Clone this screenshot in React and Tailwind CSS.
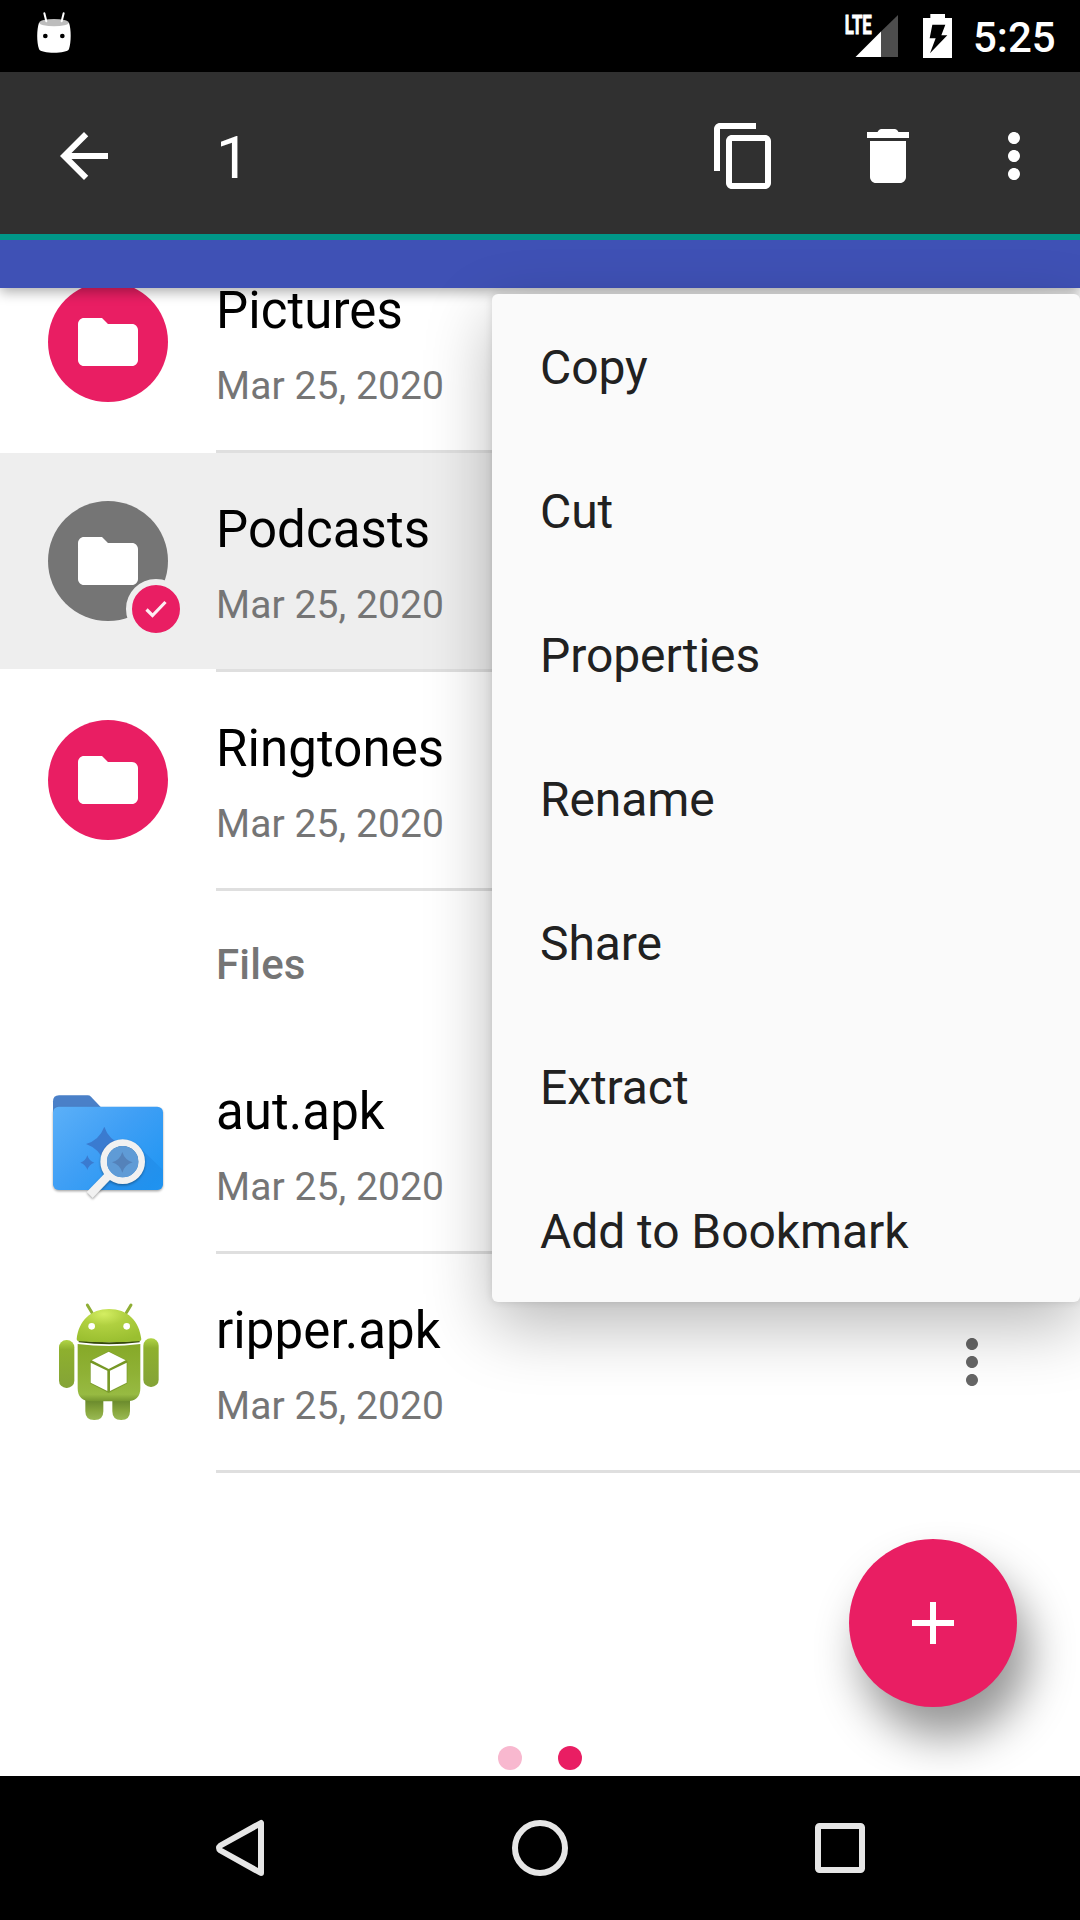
function Svg({ d, className }) {
  return (
    <svg viewBox="0 0 24 24" fill="currentColor" className={className}>
      <path d={d} />
    </svg>
  );
}

const PATHS = {
  back: "M20 11H7.83l5.59-5.59L12 4l-8 8 8 8 1.41-1.41L7.83 13H20v-2z",
  copy: "M16 1H4c-1.1 0-2 .9-2 2v14h2V3h12V1zm3 4H8c-1.1 0-2 .9-2 2v14c0 1.1.9 2 2 2h11c1.1 0 2-.9 2-2V7c0-1.1-.9-2-2-2zm0 16H8V7h11v14z",
  trash: "M6 19c0 1.1.9 2 2 2h8c1.1 0 2-.9 2-2V7H6v12zM19 4h-3.5l-.4-.6q-.4-.4-1-.4h-4.200q-.6 0-1 .4l-.4.6H5v2h14V4z",
  more: "M12 8c1.1 0 2-.9 2-2s-.9-2-2-2-2 .9-2 2 .9 2 2 2zm0 2c-1.1 0-2 .9-2 2s.9 2 2 2 2-.9 2-2-.9-2-2-2zm0 6c-1.1 0-2 .9-2 2s.9 2 2 2 2-.9 2-2-.9-2-2-2z",
  folder: "M10 4H4c-1.1 0-1.99.9-1.99 2L2 18c0 1.1.9 2 2 2h16c1.1 0 2-.9 2-2V8c0-1.1-.9-2-2-2h-8l-2-2z",
  plus: "M19 13h-6v6h-2v-6H5v-2h6V5h2v6h6v2z",
};

function StatusBar() {
  return (
    <div className="flex h-[72px] shrink-0 items-start bg-black text-white">
      <svg viewBox="108 30 108 132" className="mt-[10px] ml-9 h-11 w-9">
        <path d="M117 68C110 88 110 126 117 147C122 162 202 162 207 147C214 126 214 88 207 68z" fill="#fff" />
        <ellipse cx="162" cy="68" rx="44" ry="11" fill="#bdbdbd" />
        <path d="M133 40l6 24M191 40l-6 24" stroke="#fff" strokeWidth="6" strokeLinecap="round" />
        <circle cx="136" cy="108" r="7" fill="#000" />
        <circle cx="187" cy="108" r="7" fill="#000" />
      </svg>
      <svg viewBox="0 0 54 44" className="mt-[14px] ml-auto h-11 w-[54px] overflow-visible">
        <path d="M37 17.500V43H11.500z" fill="#fff" />
        <path d="M37 17.500L54 1V43H37z" fill="#4d4d4d" />
        <text x="0.8" y="19.500" fontSize="26" fontWeight="700" textLength="27" lengthAdjust="spacingAndGlyphs" fill="#fff" stroke="#fff" strokeWidth="0.9">LTE</text>
      </svg>
      <svg viewBox="729 42 87 132" className="mt-[14px] ml-[25px] h-11 w-[29px]">
        <path d="M751 42h44v12h21v120h-87V54h22z" fill="#fff" />
        <path d="M757 74h39l-12 32h18l-52 54 17-45h-18z" fill="#000" />
      </svg>
      <div className="mt-[13px] flex w-[128px] pl-[21px] text-[42px] leading-[50px] font-medium">5:25</div>
    </div>
  );
}

function ActionBar() {
  return (
    <div className="relative z-20 flex h-[168px] shrink-0 items-center border-b-6 border-[#009688] bg-[#303030] pt-1.5 pr-[30px] pl-12 text-white">
      <Svg d={PATHS.back} className="size-[72px]" />
      <div className="ml-24 pt-1 text-[60px] leading-[72px]">1</div>
      <Svg d={PATHS.copy} className="ml-auto size-[72px]" />
      <Svg d={PATHS.trash} className="ml-[72px] size-[72px]" />
      <Svg d={PATHS.more} className="ml-[54px] size-[72px]" />
    </div>
  );
}

function FolderAvatar({ selected }) {
  return (
    <div className={`relative flex size-[120px] items-center justify-center rounded-full text-white ${selected ? "bg-[#757575]" : "bg-[#e91e63]"}`}>
      <Svg d={PATHS.folder} className="size-[72px]" />
      {selected && (
        <div className="absolute -right-[18px] -bottom-[18px] flex size-[60px] items-center justify-center rounded-full border-6 border-[#eeeeee] bg-[#e91e63]">
          <svg viewBox="0 0 48 48" className="size-12 shrink-0" fill="none" stroke="#fdeef3" strokeWidth="3.2">
            <path d="M14.500 24.500l6 6L33.500 17" />
          </svg>
        </div>
      )}
    </div>
  );
}

function ExplorerIcon() {
  return (
    <svg viewBox="54 39 360 360" className="size-[120px]">
      <defs>
        <linearGradient id="face" x1="0" y1="0" x2="1" y2="0.8">
          <stop offset="0" stopColor="#5cb0f8" />
          <stop offset="0.5" stopColor="#3f9ff5" />
          <stop offset="1" stopColor="#2196f3" />
        </linearGradient>
        <linearGradient id="cast" x1="0" y1="0" x2="1" y2="1">
          <stop offset="0" stopColor="#1976d2" stopOpacity="0.6" />
          <stop offset="1" stopColor="#1e88e5" stopOpacity="0.2" />
        </linearGradient>
        <filter id="soft" x="-10%" y="-10%" width="120%" height="125%" colorInterpolationFilters="sRGB">
          <feDropShadow dx="0" dy="4" stdDeviation="3" floodOpacity="0.35" />
        </filter>
      </defs>
      <path d="M69 130V94q0-18 18-18h86q6 0 10 4l32 34z" fill="#4a80c8" />
      <rect x="69" y="110" width="330" height="250" rx="17" fill="url(#face)" filter="url(#soft)" />
      <path d="M324 228L399 300V343q0 17-17 17H214l26-28z" fill="url(#cast)" />
      <path d="M223 170Q236 210 276 222Q236 236 223 276Q208 236 168 222Q208 210 223 170z" fill="#3a7bd0" />
      <path d="M172 256Q177 273 193 278Q177 283 172 300Q167 283 151 278Q167 273 172 256z" fill="#3a7bd0" />
      <g filter="url(#soft)">
        <path d="M238 314L179 375" stroke="#f1f1f1" strokeWidth="25" />
        <circle cx="278" cy="275" r="57" fill="none" stroke="#f1f1f1" strokeWidth="20" />
      </g>
      <circle cx="278" cy="275" r="47" fill="#5f9bd6" />
      <path d="M277 246Q284 270 308 277Q284 284 277 308Q270 284 246 277Q270 270 277 246z" fill="#5482ba" />
    </svg>
  );
}

function ApkIcon() {
  return (
    <svg viewBox="54 66 360 360" className="size-[120px]">
      <defs>
        <linearGradient id="body" x1="0" y1="0" x2="0" y2="1">
          <stop offset="0" stopColor="#86a928" />
          <stop offset="0.5" stopColor="#8fb135" />
          <stop offset="0.88" stopColor="#97ba42" />
          <stop offset="1" stopColor="#75962f" />
        </linearGradient>
        <radialGradient id="head" cx="0.42" cy="0.15" r="0.85">
          <stop offset="0" stopColor="#d4ee62" />
          <stop offset="0.4" stopColor="#b0d040" />
          <stop offset="1" stopColor="#9abf30" />
        </radialGradient>
        <linearGradient id="limb" x1="0" y1="0" x2="0" y2="1">
          <stop offset="0" stopColor="#b0d445" />
          <stop offset="0.2" stopColor="#8eb02e" />
          <stop offset="1" stopColor="#84a337" />
        </linearGradient>
        <linearGradient id="leg" x1="0" y1="0" x2="0" y2="1">
          <stop offset="0.2" stopColor="#64842a" />
          <stop offset="0.65" stopColor="#86a53c" />
          <stop offset="1" stopColor="#9aba55" />
        </linearGradient>
      </defs>
      <path d="M172 75l14 23M303 75l-14 23" stroke="#8fae35" strokeWidth="9" strokeLinecap="round" />
      <path d="M166 340h54v54q0 26-26 26h-2q-26 0-26-26zM247 340h53v54q0 26-26 26h-1q-26 0-26-26z" fill="url(#leg)" />
      <rect x="87" y="180" width="46" height="144" rx="22" fill="url(#limb)" />
      <rect x="340" y="175" width="46" height="146" rx="22" fill="url(#limb)" />
      <path d="M143 192q94 12 188 0V325q0 39-42 39H185q-42 0-42-39z" fill="url(#body)" />
      <path d="M146 181q91 12 183 0v6q-91 12-183 0z" fill="#35480c" />
      <path d="M140 178C146 122 182 87 237 87S328 122 334 178Q334 184 326 184Q237 190 148 184Q140 184 140 178z" fill="url(#head)" />
      <circle cx="185" cy="139" r="10" fill="#fff" />
      <circle cx="290" cy="139" r="10" fill="#fff" />
      <path d="M180 243L236 214L292 243V310L236 339L180 310z" fill="#5f8017" opacity="0.5" />
      <path d="M236 215L287 241L236 267L185 241z" fill="#fff" />
      <path d="M182 248L232 272V333L182 308zM290 248L240 272V333L290 308z" fill="#fff" />
    </svg>
  );
}

function Row({ icon, name, selected }) {
  return (
    <div>
      <div className={`flex h-[216px] pl-12 ${selected ? "bg-[#eeeeee]" : ""}`}>
        <div className="pt-12">{icon}</div>
        <div className="ml-12 flex-1 pt-[47px]">
          <div className="text-[51px] leading-[60px] tracking-[0.08px] text-black">{name}</div>
          <div className="mt-[21px] text-[39px] leading-[48px] tracking-[0.08px] text-[#757575]">Mar 25, 2020</div>
        </div>
        <div className="mt-[72px] mr-[72px] text-[#666666]">
          <Svg d={PATHS.more} className="size-[72px]" />
        </div>
      </div>
      <div className="ml-[216px] h-[3px] bg-[#dfdfdf]" />
    </div>
  );
}

const MENU = ["Copy", "Cut", "Properties", "Rename", "Share", "Extract", "Add to Bookmark"];

function OverflowMenu() {
  return (
    <div className="absolute top-[294px] right-0 w-[588px] rounded-md bg-[#fafafa] shadow-[0_24px_66px_rgba(0,0,0,0.28),0_0_9px_rgba(0,0,0,0.12)]">
      {MENU.map((label) => (
        <div key={label} className="flex h-36 items-center pt-1 pl-12 text-[48px] leading-[60px] tracking-[-0.08px] text-[#212121]">
          {label}
        </div>
      ))}
    </div>
  );
}

function NavBar() {
  return (
    <div className="flex h-36 shrink-0 items-center justify-between bg-black px-[204px]">
      <svg viewBox="0 0 72 72" className="size-[72px]" fill="none" stroke="#e6e6e6" strokeWidth="6" strokeLinejoin="round">
        <path d="M57 11V61L16.5 38.5Q13.500 36 16.500 33.500z" />
      </svg>
      <svg viewBox="0 0 72 72" className="size-[72px]" fill="none" stroke="#e6e6e6" strokeWidth="6">
        <circle cx="36" cy="36" r="25" />
      </svg>
      <svg viewBox="0 0 72 72" className="size-[72px]" fill="none" stroke="#e6e6e6" strokeWidth="6">
        <rect x="14" y="14" width="44" height="44" rx="1.500" />
      </svg>
    </div>
  );
}

export default function App() {
  return (
    <div className="relative flex h-[1920px] w-[1080px] flex-col overflow-hidden bg-white font-[Roboto,sans-serif]">
      <StatusBar />
      <ActionBar />
      <div className="relative z-10 h-12 shrink-0 bg-[#3f51b5] shadow-[0_4px_12px_rgba(0,0,0,0.32)]" />
      <div className="min-h-0 flex-1 overflow-hidden">
        <div className="-mt-[54px]">
          <Row icon={<FolderAvatar />} name="Pictures" />
          <Row icon={<FolderAvatar selected />} name="Podcasts" selected />
          <Row icon={<FolderAvatar />} name="Ringtones" />
          <div className="flex h-36 items-center pt-1 pl-[216px] text-[42px] leading-[48px] font-medium tracking-[0.2px] text-[#757575]">Files</div>
          <Row icon={<ExplorerIcon />} name="aut.apk" />
          <Row icon={<ApkIcon />} name="ripper.apk" />
        </div>
      </div>
      <NavBar />
      <div className="absolute top-[1539px] right-[63px] flex size-[168px] items-center justify-center rounded-full bg-[#e91e63] text-white shadow-[12px_30px_45px_rgba(0,0,0,0.42)]">
        <Svg d={PATHS.plus} className="size-[72px]" />
      </div>
      <div className="absolute top-[1746px] left-[498px] flex gap-9">
        <div className="size-6 rounded-full bg-[#f8b8cf]" />
        <div className="size-6 rounded-full bg-[#e91e63]" />
      </div>
      <div className="absolute inset-x-0 top-0 z-20">
        <OverflowMenu />
      </div>
    </div>
  );
}
